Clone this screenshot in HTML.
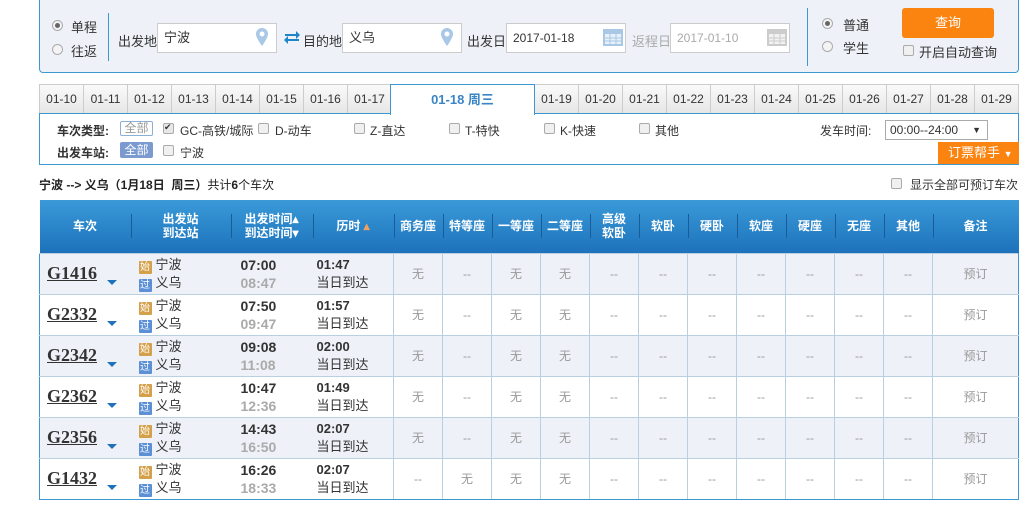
<!DOCTYPE html>
<html><head><meta charset="utf-8"><style>
*{margin:0;padding:0;box-sizing:border-box}
body{width:1028px;height:528px;background:#fff;font-family:"Liberation Sans","Noto Sans CJK SC",sans-serif;font-size:12px;color:#333;position:relative;overflow:hidden}
.a{position:absolute;white-space:nowrap}
.top{left:39px;top:0;width:980px;height:73px;background:#eef1f8;border:1px solid #3b99d0;border-top:none;border-radius:0 0 4px 4px}
.radio{width:11px;height:11px;border:1px solid #aaa;border-radius:50%;background:#f4f4f4}
.radio.on::after{content:"";position:absolute;left:2px;top:2px;width:5px;height:5px;border-radius:50%;background:#666}
.inp{background:#fff;border:1px solid #ccc;height:30px;line-height:28px;padding-left:6px;font-size:13px}
.cb{width:11px;height:11px;border:1px solid #aaa;border-radius:2px;background:#f0f0f0}
.tab{top:84px;height:30px;width:44px;border:1px solid #ccc;border-right:none;background:linear-gradient(#fafafa,#e6e6e6);text-align:center;line-height:29px;font-size:12px;color:#333}
.filt{left:39px;top:113px;width:980px;height:52px;border:1px solid #3b99d0;border-top:none}
table{position:absolute;left:39px;top:200px;border-collapse:collapse;width:980px;table-layout:fixed}
th{height:53px;background:linear-gradient(#3a9ad8,#1d72bb);color:#fff;font-weight:bold;font-size:12px;line-height:14px;position:relative}
th+th::before{content:"";position:absolute;left:0;top:14px;height:24px;border-left:1px solid #1a5c99}
td{height:41px;border:1px solid #b8d0e0;text-align:center;color:#999;font-size:12px}
tr.l td{background:#eef1f8}
td.n,td.s,td.t,td.d{border-left:none;border-right:none;text-align:left;color:#333}
td.n{border-left:1px solid #3b99d0;padding-left:7px}
td.n b{font-family:"Liberation Serif",serif;font-size:18px;text-decoration:underline;color:#333}
.ar{display:inline-block;width:0;height:0;border-left:5px solid transparent;border-right:5px solid transparent;border-top:5px solid #1d72bb;margin-left:10px;vertical-align:-6px}
td.s{padding-left:8px;line-height:18px;font-size:13px}
.ic{display:inline-block;width:13px;height:13px;font-size:10px;line-height:13px;text-align:center;color:#fff;margin-right:4px;vertical-align:-1px;border-radius:1px}
td.t{padding-left:10px;line-height:18px;font-weight:bold;font-size:14px}
td.t span{color:#aaa}
td.d{padding-left:4px;line-height:18px;font-size:13px}
td:last-child{border-right:1px solid #3b99d0}
tr:last-child td{border-bottom:1px solid #3b99d0}
</style></head><body>
<div class="a top"></div>
<div class="a radio on" style="left:52px;top:20px"></div><div class="a" style="left:71px;top:17px;font-size:13px">单程</div>
<div class="a radio" style="left:52px;top:44px"></div><div class="a" style="left:71px;top:41px;font-size:13px">往返</div>
<div class="a" style="left:108px;top:13px;height:48px;border-left:1px solid #3b99d0"></div>
<div class="a" style="left:118px;top:31px;font-size:13px">出发地</div>
<div class="a inp" style="left:157px;top:23px;width:120px">宁波</div>
<svg class="a" style="left:256px;top:28px" width="12" height="18" viewBox="0 0 12 18"><path d="M6 0a6 6 0 0 1 6 6c0 4-6 12-6 12S0 10 0 6a6 6 0 0 1 6-6z" fill="#a8c8e6"/><circle cx="6" cy="6" r="2.5" fill="#fff"/></svg>
<svg class="a" style="left:284px;top:31px" width="16" height="13" viewBox="0 0 16 13"><path d="M1 5V3h11V0l4 4-4 4V5z M15 8v2H4v3L0 9l4-4v3z" fill="#1d86c8"/></svg>
<div class="a" style="left:303px;top:31px;font-size:13px">目的地</div>
<div class="a inp" style="left:342px;top:23px;width:120px">义乌</div>
<svg class="a" style="left:441px;top:28px" width="12" height="18" viewBox="0 0 12 18"><path d="M6 0a6 6 0 0 1 6 6c0 4-6 12-6 12S0 10 0 6a6 6 0 0 1 6-6z" fill="#a8c8e6"/><circle cx="6" cy="6" r="2.5" fill="#fff"/></svg>
<div class="a" style="left:467px;top:31px;font-size:13px">出发日</div>
<div class="a inp" style="left:506px;top:23px;width:120px;font-size:12px">2017-01-18</div>
<svg class="a" style="left:603px;top:27px" width="20" height="20" viewBox="0 0 20 20"><rect x="0" y="2" width="20" height="17" fill="#a8c8e6"/><rect x="2" y="7" width="16" height="10" fill="#e8f0f8"/><path d="M2 11h16M2 14h16M7 7v10M13 7v10" stroke="#a8c8e6"/></svg>
<div class="a" style="left:632px;top:31px;font-size:13px;color:#aaa">返程日</div>
<div class="a inp" style="left:670px;top:23px;width:120px;font-size:12px;color:#aaa">2017-01-10</div>
<svg class="a" style="left:767px;top:27px" width="20" height="20" viewBox="0 0 20 20"><rect x="0" y="2" width="20" height="17" fill="#ccc"/><rect x="2" y="7" width="16" height="10" fill="#f2f2f2"/><path d="M2 11h16M2 14h16M7 7v10M13 7v10" stroke="#ccc"/></svg>
<div class="a" style="left:807px;top:8px;height:58px;border-left:1px solid #3b99d0"></div>
<div class="a radio on" style="left:822px;top:18px"></div><div class="a" style="left:843px;top:15px;font-size:13px">普通</div>
<div class="a radio" style="left:822px;top:41px"></div><div class="a" style="left:843px;top:38px;font-size:13px">学生</div>
<div class="a" style="left:902px;top:8px;width:92px;height:30px;background:#fb8410;border-radius:3px;color:#fff;text-align:center;line-height:30px;font-size:13px">查询</div>
<div class="a cb" style="left:903px;top:45px"></div><div class="a" style="left:919px;top:42px;font-size:13px">开启自动查询</div>

<div class="a tab" style="left:39px">01-10</div><div class="a tab" style="left:83px">01-11</div><div class="a tab" style="left:127px">01-12</div><div class="a tab" style="left:171px">01-13</div><div class="a tab" style="left:215px">01-14</div><div class="a tab" style="left:259px">01-15</div><div class="a tab" style="left:303px">01-16</div><div class="a tab" style="left:347px">01-17</div>
<div class="a" style="left:390px;top:84px;width:145px;height:31px;background:#fff;border:1px solid #3b99d0;border-bottom:none;text-align:center;line-height:29px;font-weight:bold;color:#3a85c6;font-size:13px;z-index:2">01-18 周三</div>
<div class="a tab" style="left:534px">01-19</div><div class="a tab" style="left:578px">01-20</div><div class="a tab" style="left:622px">01-21</div><div class="a tab" style="left:666px">01-22</div><div class="a tab" style="left:710px">01-23</div><div class="a tab" style="left:754px">01-24</div><div class="a tab" style="left:798px">01-25</div><div class="a tab" style="left:842px">01-26</div><div class="a tab" style="left:886px">01-27</div><div class="a tab" style="left:930px">01-28</div><div class="a tab" style="left:974px;width:45px;border-right:1px solid #ccc">01-29</div>
<div class="a filt"></div>
<div class="a" style="left:39px;top:113px;width:351px;border-top:1px solid #3b99d0"></div><div class="a" style="left:535px;top:113px;width:484px;border-top:1px solid #3b99d0"></div>
<div class="a" style="left:57px;top:122px;font-weight:bold;color:#333">车次类型:</div>
<div class="a" style="left:120px;top:121px;width:33px;height:15px;border:1px solid #8ab0d8;border-radius:2px;color:#999;text-align:center;line-height:13px">全部</div>
<div class="a cb" style="left:163px;top:123px;background:#e8e8e8"></div><div class="a" style="left:164px;top:122px;font-size:9px;line-height:10px">✔</div><div class="a" style="left:180px;top:122px">GC-高铁/城际</div>
<div class="a cb" style="left:258px;top:123px"></div><div class="a" style="left:275px;top:122px">D-动车</div>
<div class="a cb" style="left:354px;top:123px"></div><div class="a" style="left:370px;top:122px">Z-直达</div>
<div class="a cb" style="left:449px;top:123px"></div><div class="a" style="left:465px;top:122px">T-特快</div>
<div class="a cb" style="left:544px;top:123px"></div><div class="a" style="left:560px;top:122px">K-快速</div>
<div class="a cb" style="left:639px;top:123px"></div><div class="a" style="left:655px;top:122px">其他</div>
<div class="a" style="left:820px;top:122px">发车时间:</div>
<div class="a" style="left:885px;top:120px;width:103px;height:20px;border:1px solid #aaa;background:#fff;line-height:18px;padding-left:4px">00:00--24:00 <span style="position:absolute;right:6px;font-size:9px">▼</span></div>
<div class="a" style="left:57px;top:144px;font-weight:bold;color:#333">出发车站:</div>
<div class="a" style="left:120px;top:142px;width:33px;height:16px;background:#7a9ad0;border-radius:2px;color:#fff;text-align:center;line-height:16px">全部</div>
<div class="a cb" style="left:163px;top:145px"></div><div class="a" style="left:180px;top:144px">宁波</div>
<div class="a" style="left:938px;top:142px;width:81px;height:22px;background:#fb8410;color:#fff;line-height:22px;padding-left:10px;font-size:13px">订票帮手 <span style="font-size:9px">▼</span></div>

<div class="a" style="left:39px;top:176px;font-size:12px;color:#222"><b>宁波 --&gt; 义乌（1月18日&nbsp; 周三）</b>共计<b>6</b>个车次</div>
<div class="a cb" style="left:891px;top:178px"></div><div class="a" style="left:910px;top:176px">显示全部可预订车次</div>

<table>
<colgroup><col style="width:91px"><col style="width:100px"><col style="width:82px"><col style="width:81px"><col style="width:49px"><col style="width:49px"><col style="width:49px"><col style="width:49px"><col style="width:49px"><col style="width:49px"><col style="width:49px"><col style="width:49px"><col style="width:49px"><col style="width:49px"><col style="width:49px"><col></colgroup>
<tr><th>车次</th><th>出发站<br>到达站</th><th>出发时间▴<br>到达时间▾</th><th>历时 <span style="color:#f0a060">▴</span></th><th>商务座</th><th>特等座</th><th>一等座</th><th>二等座</th><th>高级<br>软卧</th><th>软卧</th><th>硬卧</th><th>软座</th><th>硬座</th><th>无座</th><th>其他</th><th>备注</th></tr>
<tr class="l"><td class="n"><b>G1416</b><span class="ar"></span></td><td class="s"><span class="ic" style="background:#d4a04a">始</span>宁波<br><span class="ic" style="background:#5b8fd6">过</span>义乌</td><td class="t">07:00<br><span>08:47</span></td><td class="d"><b>01:47</b><br>当日到达</td><td>无</td><td>--</td><td>无</td><td>无</td><td>--</td><td>--</td><td>--</td><td>--</td><td>--</td><td>--</td><td>--</td><td>预订</td></tr>
<tr><td class="n"><b>G2332</b><span class="ar"></span></td><td class="s"><span class="ic" style="background:#d4a04a">始</span>宁波<br><span class="ic" style="background:#5b8fd6">过</span>义乌</td><td class="t">07:50<br><span>09:47</span></td><td class="d"><b>01:57</b><br>当日到达</td><td>无</td><td>--</td><td>无</td><td>无</td><td>--</td><td>--</td><td>--</td><td>--</td><td>--</td><td>--</td><td>--</td><td>预订</td></tr>
<tr class="l"><td class="n"><b>G2342</b><span class="ar"></span></td><td class="s"><span class="ic" style="background:#d4a04a">始</span>宁波<br><span class="ic" style="background:#5b8fd6">过</span>义乌</td><td class="t">09:08<br><span>11:08</span></td><td class="d"><b>02:00</b><br>当日到达</td><td>无</td><td>--</td><td>无</td><td>无</td><td>--</td><td>--</td><td>--</td><td>--</td><td>--</td><td>--</td><td>--</td><td>预订</td></tr>
<tr><td class="n"><b>G2362</b><span class="ar"></span></td><td class="s"><span class="ic" style="background:#d4a04a">始</span>宁波<br><span class="ic" style="background:#5b8fd6">过</span>义乌</td><td class="t">10:47<br><span>12:36</span></td><td class="d"><b>01:49</b><br>当日到达</td><td>无</td><td>--</td><td>无</td><td>无</td><td>--</td><td>--</td><td>--</td><td>--</td><td>--</td><td>--</td><td>--</td><td>预订</td></tr>
<tr class="l"><td class="n"><b>G2356</b><span class="ar"></span></td><td class="s"><span class="ic" style="background:#d4a04a">始</span>宁波<br><span class="ic" style="background:#5b8fd6">过</span>义乌</td><td class="t">14:43<br><span>16:50</span></td><td class="d"><b>02:07</b><br>当日到达</td><td>无</td><td>--</td><td>无</td><td>无</td><td>--</td><td>--</td><td>--</td><td>--</td><td>--</td><td>--</td><td>--</td><td>预订</td></tr>
<tr><td class="n"><b>G1432</b><span class="ar"></span></td><td class="s"><span class="ic" style="background:#d4a04a">始</span>宁波<br><span class="ic" style="background:#5b8fd6">过</span>义乌</td><td class="t">16:26<br><span>18:33</span></td><td class="d"><b>02:07</b><br>当日到达</td><td>--</td><td>无</td><td>无</td><td>无</td><td>--</td><td>--</td><td>--</td><td>--</td><td>--</td><td>--</td><td>--</td><td>预订</td></tr>
</table>
</body></html>
